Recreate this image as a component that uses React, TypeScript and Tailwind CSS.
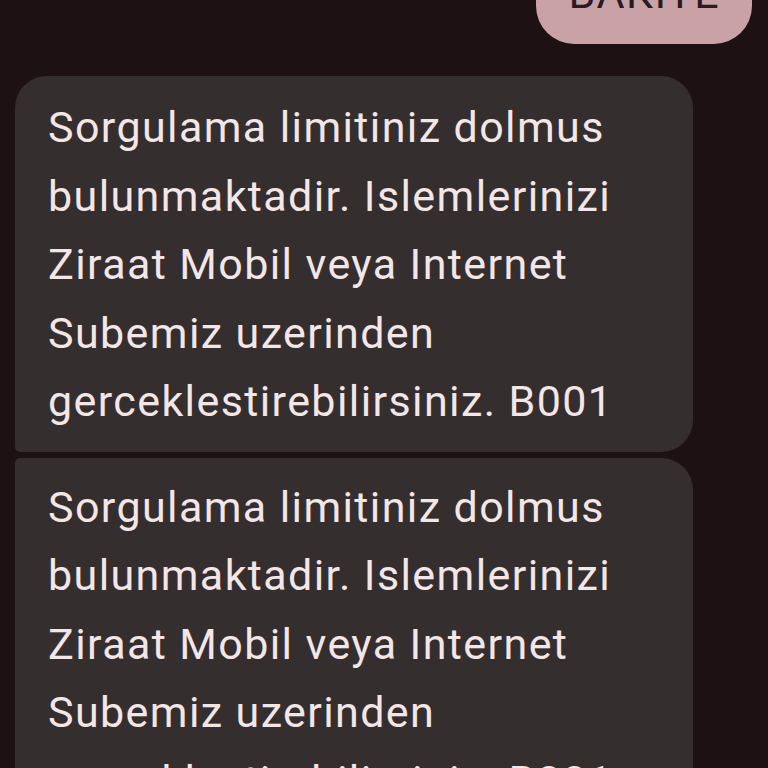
const lines = [
  'Sorgulama limitiniz dolmus',
  'bulunmaktadir. Islemlerinizi',
  'Ziraat Mobil veya Internet',
  'Subemiz uzerinden',
  'gerceklestirebilirsiniz. B001',
]

function Bubble({ first }: { first: boolean }) {
  return (
    <div
      className={`ml-[15px] w-[678px] bg-[#352e2f] pl-[33px] pr-6 text-[#f3e6e7] ${
        first ? 'rounded-t-[32px] rounded-bl-[5px] rounded-br-[32px] pt-[17px] pb-[16px]' : 'rounded-tl-[5px] rounded-tr-[32px] rounded-b-[32px] pt-[15px] pb-[17px]'
      }`}
    >
      {lines.map((l) => (
        <div key={l} className="whitespace-nowrap">{l}</div>
      ))}
    </div>
  )
}

export default function App() {
  return (
    <div
      className="h-[768px] w-[768px] overflow-hidden bg-[#1e1113] text-[43px] leading-[68.5px] tracking-[1.4px]"
      style={{ fontFamily: 'Roboto, "Noto Sans", sans-serif' }}
    >
      <div className="flex justify-end pr-[16px]">
        <div className="-mt-[41px] rounded-[38px] bg-[#c9a2a8] pl-[32px] pr-[32px] pb-[16.5px] pt-0 text-[#2a1b1e]">
          BAKIYE
        </div>
      </div>
      <div className="mt-[32px] flex flex-col gap-[6px]">
        <Bubble first />
        <Bubble first={false} />
      </div>
    </div>
  )
}
